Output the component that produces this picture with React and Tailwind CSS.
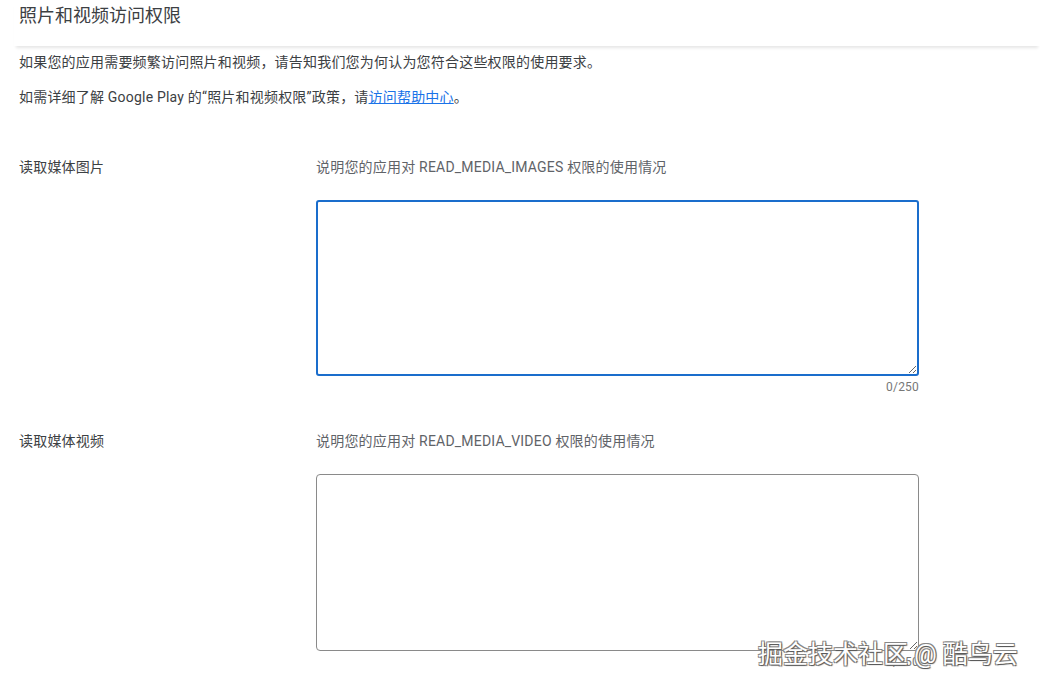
const FONT = { fontFamily: 'Roboto, "Noto Sans CJK SC", sans-serif' }

function PermissionRow({ label, perm, focused }) {
    return (
        <div className="flex">
            <div className="w-[297px] shrink-0 pt-[1px] text-[14px] leading-[20px] tracking-[0.2px] text-[#3c4043]">{label}</div>
            <div className="w-[603px]">
                <div className="text-[14px] leading-[22px] tracking-[0.2px] text-[#5f6368]">
                    说明您的应用对 {perm} 权限的使用情况
                </div>
                <textarea
                    className={
                        focused
                            ? "mt-[22px] block w-[603px] h-[176px] rounded-[3px] border-2 border-[#1a6dcc] outline-none"
                            : "mt-[22px] block w-[603px] h-[177px] rounded-[4px] border border-[#8a8a8a] outline-none"
                    }
                />
                <div className="mt-[3px] text-right text-[12px] leading-[16px] text-[#777]">0/250</div>
            </div>
        </div>
    )
}

export default function App() {
    return (
        <div className="relative w-[1040px] h-[689px] overflow-hidden bg-white" style={FONT}>
            <div className="ml-[14px] h-[46px] pl-[5px] pt-[3px] shadow-[0_4px_3px_-2px_rgba(0,0,0,0.1)]">
                <h1 className="text-[18px] leading-[26px] text-[#3c4043]">照片和视频访问权限</h1>
            </div>

            <div className="px-[19px] text-[14px] tracking-[0.2px] text-[#3c4043]">
                <p className="mt-[6px] leading-[20px]">
                    如果您的应用需要频繁访问照片和视频，请告知我们您为何认为您符合这些权限的使用要求。
                </p>
                <p className="mt-[15px] leading-[20px]">
                    如需详细了解 Google Play 的“照片和视频权限”政策，请
                    <a href="#" className="text-[#1a73e8] underline">访问帮助中心</a>。
                </p>

                <div className="mt-[49px]">
                    <PermissionRow label="读取媒体图片" perm="READ_MEDIA_IMAGES" focused />
                </div>
                <div className="mt-[35px]">
                    <PermissionRow label="读取媒体视频" perm="READ_MEDIA_VIDEO" />
                </div>
            </div>

            <div
                className="absolute left-[758px] top-[638px] text-[25px] leading-[34px] text-white"
                style={{ textShadow: '1px 1px 1px #555, -1px -1px 0 #888, 1px -1px 0 #888, -1px 1px 0 #888' }}
            >
                掘金技术社区 @ 酷鸟云
            </div>
        </div>
    )
}
